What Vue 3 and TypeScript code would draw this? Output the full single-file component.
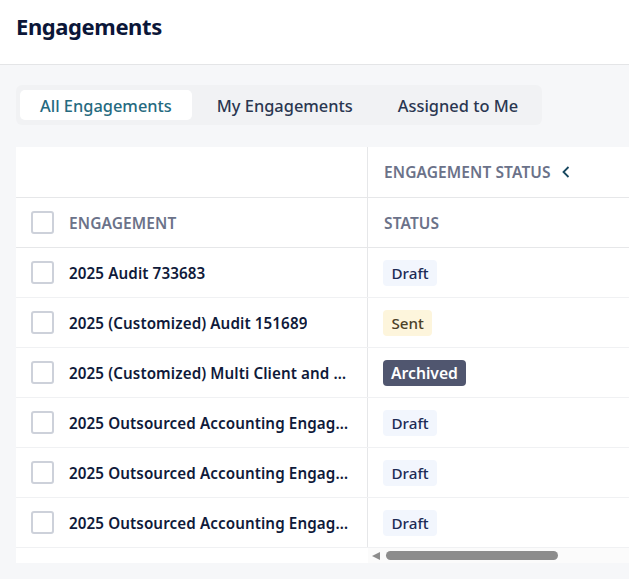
<template>
  <div class="page">
    <header class="top">
      <h1>Engagements</h1>
    </header>
    <main class="content">
      <nav class="tabs">
        <button
          v-for="(tab, i) in tabs"
          :key="tab"
          class="tab"
          :class="{ active: i === activeTab }"
          @click="activeTab = i"
        >
          {{ tab }}
        </button>
      </nav>

      <section class="table">
        <div class="row group-row">
          <div class="cell name-cell"></div>
          <div class="cell status-cell head-text">
            <span>ENGAGEMENT STATUS</span>
            <svg class="chevron" width="10" height="12" viewBox="0 0 10 12" fill="none">
              <path d="M7.5 1 2.5 6l5 5" stroke="#17475f" stroke-width="1.8" />
            </svg>
          </div>
        </div>
        <div class="row title-row">
          <div class="cell name-cell head-text">
            <span class="check"></span>
            <span>ENGAGEMENT</span>
          </div>
          <div class="cell status-cell head-text">STATUS</div>
        </div>
        <div v-for="row in rows" :key="row.id" class="row body-row">
          <div class="cell name-cell">
            <span class="check"></span>
            <span class="name">{{ row.name }}</span>
          </div>
          <div class="cell status-cell">
            <span class="badge" :class="row.status.toLowerCase()">{{ row.status }}</span>
          </div>
        </div>
        <div class="scroll">
          <div class="scroll-track">
            <span class="scroll-arrow"></span>
            <span class="scroll-thumb"></span>
          </div>
        </div>
      </section>
    </main>
  </div>
</template>

<script setup lang="ts">
import { ref } from 'vue';

interface EngagementRow {
  id: number;
  name: string;
  status: 'Draft' | 'Sent' | 'Archived';
}

const tabs = ['All Engagements', 'My Engagements', 'Assigned to Me'];
const activeTab = ref(0);

const rows: EngagementRow[] = [
  { id: 1, name: '2025 Audit 733683', status: 'Draft' },
  { id: 2, name: '2025 (Customized) Audit 151689', status: 'Sent' },
  { id: 3, name: '2025 (Customized) Multi Client and Entity Engagement', status: 'Archived' },
  { id: 4, name: '2025 Outsourced Accounting Engagement 104412', status: 'Draft' },
  { id: 5, name: '2025 Outsourced Accounting Engagement 220871', status: 'Draft' },
  { id: 6, name: '2025 Outsourced Accounting Engagement 318256', status: 'Draft' },
];
</script>

<style>
html,
body {
  margin: 0;
  background: #f6f7f9;
}
</style>

<style scoped>
.page {
  height: 579px;
  overflow: hidden;
  font-family: "Noto Sans", "Open Sans", sans-serif;
  color: #14213f;
  background: #f6f7f9;
}

.top {
  height: 64px;
  padding: 0 16px;
  background: #fff;
  border-bottom: 1px solid #e4e5e7;
}

h1 {
  margin: 0;
  padding-top: 11px;
  font-size: 22px;
  line-height: 30px;
  font-weight: 700;
  letter-spacing: -0.4px;
  color: #0b1638;
}

.content {
  padding: 20px 0 0 16px;
}

.tabs {
  display: flex;
  align-items: center;
  gap: 5px;
  width: 526px;
  height: 40px;
  box-sizing: border-box;
  padding: 0 4px;
  background: #f1f2f4;
  border-radius: 6px;
}

.tab {
  height: 30px;
  padding: 1px 20px 0;
  border: 0;
  border-radius: 5px;
  background: transparent;
  font: 500 16.4px "Noto Sans", sans-serif;
  color: #2a3650;
  white-space: nowrap;
}

.tab.active {
  background: #fff;
  color: #256a80;
}

.table {
  margin-top: 22px;
  background: #fff;
}

.row {
  display: flex;
  box-sizing: border-box;
  border-bottom: 1px solid #e6e7e9;
}

.group-row {
  height: 51px;
}

.title-row {
  height: 50px;
}

.body-row {
  height: 50px;
  border-bottom-color: #f0f1f3;
}

.cell {
  display: flex;
  align-items: center;
  box-sizing: border-box;
}

.name-cell {
  flex: 0 0 352px;
  min-width: 0;
  padding-left: 15px;
  padding-right: 17px;
  gap: 15px;
  border-right: 1px solid #e6e7e9;
}

.status-cell {
  flex: 1;
  min-width: 0;
  padding-left: 16px;
}

.head-text {
  font-size: 15.5px;
  font-weight: 600;
  letter-spacing: 0.1px;
  line-height: 20px;
  color: #6b7289;
}

.group-row .head-text {
  padding-bottom: 1px;
}

.chevron {
  margin-left: 10px;
}

.check {
  flex: none;
  width: 23px;
  height: 23px;
  box-sizing: border-box;
  border: 2px solid #cdd1da;
  border-radius: 3px;
  background: #fff;
}

.name {
  min-width: 0;
  margin-top: 1px;
  overflow: hidden;
  white-space: nowrap;
  text-overflow: ellipsis;
  font-size: 15.2px;
  font-weight: 600;
  letter-spacing: 0.1px;
  color: #0f1a3a;
}

.badge {
  height: 26px;
  margin: 1px 0 0 -1px;
  padding: 0 8.5px;
  border-radius: 4px;
  font-size: 15.2px;
  font-weight: 500;
  line-height: 26px;
}

.badge.draft {
  background: #f2f6fd;
  color: #1c2b55;
}

.badge.sent {
  background: #fdf5dc;
  color: #4c4128;
}

.badge.archived {
  padding: 0 8px;
  background: #50566f;
  color: #fff;
  font-size: 15.7px;
  font-weight: 600;
}

.scroll {
  height: 15px;
  padding-left: 352px;
}

.scroll-track {
  display: flex;
  align-items: center;
  height: 100%;
  padding-left: 4px;
  background: #fbfbfb;
}

.scroll-arrow {
  width: 0;
  height: 0;
  border-top: 4.5px solid transparent;
  border-bottom: 4.5px solid transparent;
  border-right: 8px solid #8c8c8c;
}

.scroll-thumb {
  width: 172px;
  height: 9px;
  margin-left: 6px;
  border-radius: 5px;
  background: #8c8c8c;
}
</style>
